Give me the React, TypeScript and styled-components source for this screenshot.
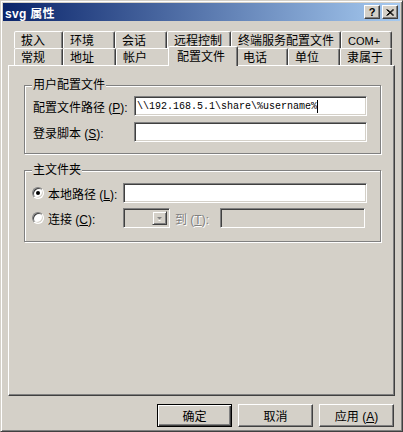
import styled, { createGlobalStyle } from "styled-components";

const GlobalStyle = createGlobalStyle`
  html, body {
    margin: 0;
    padding: 0;
    background: #d4d0c8;
  }
`;

const Window = styled.div`
  width: 403px;
  height: 432px;
  box-sizing: border-box;
  background: #d4d0c8;
  border: 1px solid;
  border-color: #d4d0c8 #404040 #404040 #d4d0c8;
  box-shadow: inset 1px 1px #fff, inset -1px -1px #808080;
  padding: 2px;
  display: flex;
  flex-direction: column;
  font-family: "Liberation Sans", "Noto Sans CJK SC", sans-serif;
  font-size: 12px;
  color: #000;
  overflow: hidden;
`;

const TitleBar = styled.div`
  height: 18px;
  flex-shrink: 0;
  display: flex;
  align-items: center;
  padding: 0 2px 0 2px;
  background: linear-gradient(to right, #0a246a, #a6caf0);
  color: #fff;
  font-weight: bold;
  font-size: 12px;
`;

const TitleText = styled.span`
  flex: 1;
  white-space: nowrap;
  letter-spacing: 0.3px;
`;

const CaptionButton = styled.div<{ $gap?: number }>`
  width: 16px;
  height: 14px;
  box-sizing: border-box;
  margin-left: ${(p) => p.$gap ?? 0}px;
  background: #d4d0c8;
  border: 1px solid;
  border-color: #fff #404040 #404040 #fff;
  box-shadow: inset -1px -1px #808080;
  display: flex;
  align-items: center;
  justify-content: center;
  color: #000;
  font-size: 11px;
  font-weight: bold;
  line-height: 12px;
`;

const Body = styled.div`
  display: flex;
  flex-direction: column;
  padding: 0 5px;
`;

const TabStrip = styled.div`
  margin-top: 10px;
  display: flex;
  flex-direction: column;
`;

const TabRow = styled.div`
  display: flex;
  align-items: flex-end;
  height: 17px;
  padding-left: 6px;
`;

const Tab = styled.div<{ $w: number; $active?: boolean }>`
  position: relative;
  width: ${(p) => p.$w + (p.$active ? 4 : 0)}px;
  height: ${(p) => (p.$active ? 20 : 17)}px;
  margin: 0 ${(p) => (p.$active ? -2 : 0)}px ${(p) => (p.$active ? -1 : 0)}px;
  z-index: ${(p) => (p.$active ? 2 : 0)};
  box-sizing: border-box;
  background: #d4d0c8;
  border: 1px solid;
  border-bottom: none;
  border-color: #fff #404040 transparent #fff;
  box-shadow: inset -1px 0 #808080;
  border-radius: 2px 2px 0 0;
  padding: ${(p) => (p.$active ? "2px 0 0 8px" : "1px 0 0 6px")};
  line-height: 14px;
  white-space: nowrap;
  font-family: "Noto Sans CJK SC", sans-serif;
`;

const TabLatin = styled.span`
  font-family: "Liberation Sans", sans-serif;
  font-size: 11px;
`;

const Panel = styled.div`
  position: relative;
  height: 331px;
  box-sizing: border-box;
  border: 1px solid;
  border-color: #fff #404040 #404040 #fff;
  box-shadow: inset -1px -1px #808080;
  padding: 19px 13px 0 15px;
  display: flex;
  flex-direction: column;
`;

const GroupBox = styled.div<{ $top?: number }>`
  position: relative;
  margin-top: ${(p) => p.$top ?? 0}px;
  border: 1px solid #808080;
  box-shadow: inset 1px 1px #fff, 1px 1px #fff;
`;

const Legend = styled.span`
  position: absolute;
  top: -8px;
  left: 7px;
  padding: 0 1px;
  background: #d4d0c8;
  line-height: 15px;
`;

const ProfileGrid = styled.div`
  display: grid;
  grid-template-columns: 101px 1fr;
  grid-template-rows: 20px 20px;
  row-gap: 6px;
  align-items: center;
  padding: 10px 13px 11px 8px;
`;

const HomeGrid = styled.div`
  display: grid;
  grid-template-columns: 91px 1fr;
  grid-template-rows: 20px 20px;
  row-gap: 5px;
  align-items: center;
  padding: 12px 13px 13px 7px;
`;

const Label = styled.span<{ $disabled?: boolean }>`
  white-space: nowrap;
  color: ${(p) => (p.$disabled ? "#808080" : "#000")};
  text-shadow: ${(p) => (p.$disabled ? "1px 1px #fff" : "none")};
`;

const Key = styled.span`
  text-decoration: underline;
`;

const TextBox = styled.div<{ $disabled?: boolean; $w?: number }>`
  height: 20px;
  ${(p) => (p.$w ? `width: ${p.$w}px;` : "")}
  box-sizing: border-box;
  background: ${(p) => (p.$disabled ? "#d4d0c8" : "#fff")};
  border: 1px solid;
  border-color: #808080 #fff #fff #808080;
  box-shadow: inset 1px 1px #404040, inset -1px -1px #d4d0c8;
  padding: 0 2px;
  display: flex;
  align-items: center;
  font-family: "Liberation Mono", monospace;
  font-size: 10px;
  white-space: nowrap;
  overflow: hidden;
`;

const Caret = styled.span`
  display: inline-block;
  width: 1px;
  height: 13px;
  background: #000;
`;

const RadioRow = styled.label`
  display: flex;
  align-items: center;
  gap: 4px;
  white-space: nowrap;
`;

const Radio = styled.span<{ $checked?: boolean }>`
  width: 12px;
  height: 12px;
  box-sizing: border-box;
  border-radius: 50%;
  background: #fff;
  border: 1px solid;
  border-color: #808080 #fff #fff #808080;
  box-shadow: inset 1px 1px #404040, inset -1px -1px #d4d0c8;
  display: flex;
  align-items: center;
  justify-content: center;
  &::after {
    content: "";
    width: 4px;
    height: 4px;
    border-radius: 50%;
    background: ${(p) => (p.$checked ? "#000" : "transparent")};
  }
`;

const ConnectCell = styled.div`
  display: flex;
  align-items: center;
`;

const Combo = styled.div`
  width: 47px;
  height: 20px;
  box-sizing: border-box;
  background: #d4d0c8;
  border: 1px solid;
  border-color: #808080 #fff #fff #808080;
  box-shadow: inset 1px 1px #404040, inset -1px -1px #d4d0c8;
  padding: 2px;
  display: flex;
  justify-content: flex-end;
  margin-right: 5px;
`;

const ComboButton = styled.div`
  width: 15px;
  height: 14px;
  box-sizing: border-box;
  border: 1px solid;
  border-color: #d4d0c8 #404040 #404040 #d4d0c8;
  box-shadow: inset 1px 1px #fff, inset -1px -1px #808080;
  display: flex;
  align-items: center;
  justify-content: center;
`;

const ButtonRow = styled.div`
  display: flex;
  justify-content: flex-end;
  gap: 6px;
  margin-top: 8px;
  padding-right: 1px;
`;

const PushButton = styled.button<{ $default?: boolean }>`
  width: 75px;
  height: 23px;
  box-sizing: border-box;
  margin: 0;
  padding: 0;
  background: #d4d0c8;
  font-family: "Liberation Sans", "Noto Sans CJK SC", sans-serif;
  font-size: 12px;
  color: #000;
  border: 1px solid;
  border-color: ${(p) =>
    p.$default ? "#000" : "#fff #404040 #404040 #fff"};
  box-shadow: ${(p) =>
    p.$default
      ? "inset 1px 1px #fff, inset -1px -1px #404040, inset -2px -2px #808080"
      : "inset -1px -1px #808080"};
`;

const rowOne = [
  { label: "拔入", w: 49 },
  { label: "环境", w: 52 },
  { label: "会话", w: 52 },
  { label: "远程控制", w: 64 },
  { label: "终端服务配置文件", w: 110 },
  { label: "COM+", w: 51, latin: true },
];

const rowTwo = [
  { label: "常规", w: 49 },
  { label: "地址", w: 53 },
  { label: "帐户", w: 54 },
  { label: "配置文件", w: 66, active: true },
  { label: "电话", w: 52 },
  { label: "单位", w: 52 },
  { label: "隶属于", w: 52 },
];

const App = () => {
  return (
    <Window>
      <GlobalStyle />
      <TitleBar>
        <TitleText>svg 属性</TitleText>
        <CaptionButton>?</CaptionButton>
        <CaptionButton $gap={2}>
          <svg width="8" height="7" viewBox="0 0 8 7">
            <path d="M0.5 0.5 L7 6.5 M1.5 0.5 L8 6.5 M7 0.5 L0.5 6.5 M8 0.5 L1.5 6.5" stroke="#000" strokeWidth="1" />
          </svg>
        </CaptionButton>
      </TitleBar>

      <Body>
        <TabStrip>
          <TabRow>
            {rowOne.map((t) => (
              <Tab key={t.label} $w={t.w}>
                {t.latin ? <TabLatin>{t.label}</TabLatin> : t.label}
              </Tab>
            ))}
          </TabRow>
          <TabRow>
            {rowTwo.map((t) => (
              <Tab key={t.label} $w={t.w} $active={t.active}>
                {t.label}
              </Tab>
            ))}
          </TabRow>
        </TabStrip>

        <Panel>
          <GroupBox>
            <Legend>用户配置文件</Legend>
            <ProfileGrid>
              <Label>
                配置文件路径 (<Key>P</Key>):
              </Label>
              <TextBox>
                {"\\\\192.168.5.1\\share\\%username%"}
                <Caret />
              </TextBox>
              <Label>
                登录脚本 (<Key>S</Key>):
              </Label>
              <TextBox />
            </ProfileGrid>
          </GroupBox>

          <GroupBox $top={16}>
            <Legend>主文件夹</Legend>
            <HomeGrid>
              <RadioRow>
                <Radio $checked />
                <span>
                  本地路径 (<Key>L</Key>):
                </span>
              </RadioRow>
              <TextBox />
              <RadioRow>
                <Radio />
                <span>
                  连接 (<Key>C</Key>):
                </span>
              </RadioRow>
              <ConnectCell>
                <Combo>
                  <ComboButton>
                    <svg width="7" height="5" viewBox="0 0 7 5">
                      <path d="M1 1 H6 L3.5 3.5 Z" fill="#808080" />
                      <path d="M2.5 4.5 L4.5 4.5" stroke="#fff" strokeWidth="1" />
                    </svg>
                  </ComboButton>
                </Combo>
                <Label $disabled>
                  到 (<Key>T</Key>):
                </Label>
                <TextBox $disabled $w={145} style={{ marginLeft: "auto", marginRight: 2 }} />
              </ConnectCell>
            </HomeGrid>
          </GroupBox>
        </Panel>

        <ButtonRow>
          <PushButton $default>确定</PushButton>
          <PushButton>取消</PushButton>
          <PushButton>
            应用 (<Key>A</Key>)
          </PushButton>
        </ButtonRow>
      </Body>
    </Window>
  );
};

export default App;
